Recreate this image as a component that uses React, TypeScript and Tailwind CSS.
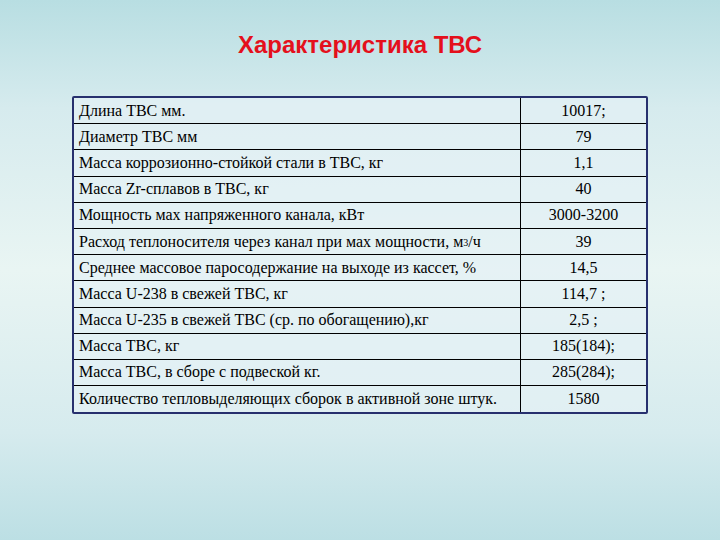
import React from "react";

// Строки таблицы: параметр и значение
const rows: { label: React.ReactNode; value: string }[] = [
  { label: "Длина ТВС мм.", value: "10017;" },
  { label: "Диаметр ТВС мм", value: "79" },
  { label: "Масса коррозионно-стойкой стали в ТВС, кг", value: "1,1" },
  { label: "Масса Zr-сплавов в ТВС, кг", value: "40" },
  { label: "Мощность мах напряженного канала, кВт", value: "3000-3200" },
  {
    label: (
      <>
        Расход теплоносителя через канал при мах мощности, м
        <sup className="text-[10px] relative -top-[1px]">3</sup>/ч
      </>
    ),
    value: "39",
  },
  { label: "Среднее массовое паросодержание на выходе из кассет, %", value: "14,5" },
  { label: "Масса U-238 в свежей ТВС, кг", value: "114,7 ;" },
  { label: "Масса U-235 в свежей ТВС (ср. по обогащению),кг", value: "2,5 ;" },
  { label: "Масса ТВС, кг", value: "185(184);" },
  { label: "Масса ТВС, в сборе с подвеской кг.", value: "285(284);" },
  { label: "Количество тепловыделяющих сборок в активной зоне штук.", value: "1580" },
];

const App: React.FC = () => {
  return (
    <div className="w-[720px] h-[540px] overflow-hidden bg-[linear-gradient(to_bottom,#b8dee2_0%,#d6ebee_20%,#e9f5f3_50%,#d6ebee_80%,#bcdfe4_100%)]">
      <h1 className="pt-[32px] text-center text-[24px] leading-[26px] font-bold text-[#e4101c] font-['Liberation_Sans',Arial,sans-serif]">
        Характеристика ТВС
      </h1>

      <div className="mt-[38px] ml-[72px] w-[576px] border-2 border-[#27306e] rounded-[2px] bg-[#e4f1f5]/70 text-[16px] text-black font-['Liberation_Serif','Times_New_Roman',serif]">
        {rows.map((row, i) => (
          <div
            key={i}
            className={`flex h-[26.2px] items-center ${i < rows.length - 1 ? "border-b border-black" : ""}`}
          >
            <div className="flex-1 h-full flex items-center pl-[5px] border-r border-black whitespace-nowrap">
              <span>{row.label}</span>
            </div>
            <div className="w-[125px] h-full flex items-center justify-center whitespace-nowrap">
              <span>{row.value}</span>
            </div>
          </div>
        ))}
      </div>
    </div>
  );
};

export default App;
